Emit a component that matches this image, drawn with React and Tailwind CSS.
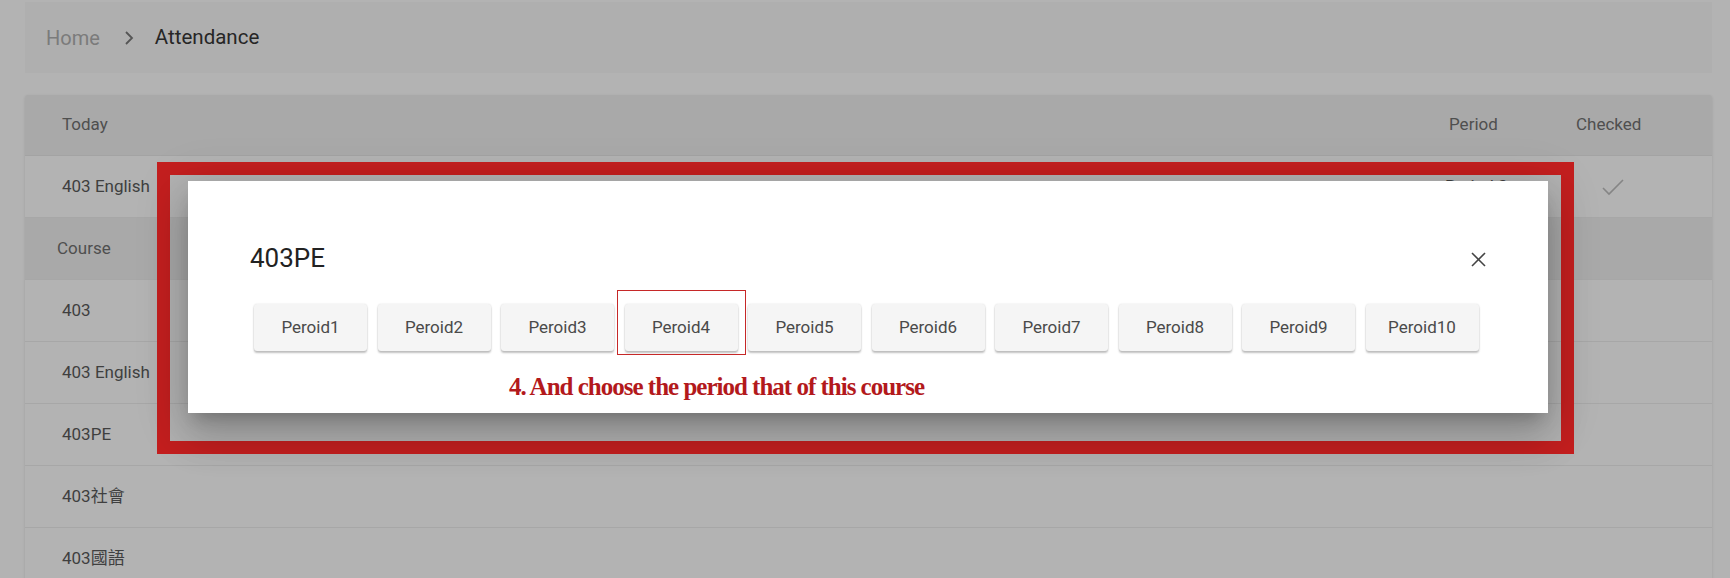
import React from "react";

const font = { fontFamily: "Roboto, 'Noto Sans CJK TC', sans-serif" };

const courses = ["403", "403 English", "403PE", "403社會", "403國語"];
const periods = ["Peroid1", "Peroid2", "Peroid3", "Peroid4", "Peroid5", "Peroid6", "Peroid7", "Peroid8", "Peroid9", "Peroid10"];

function Check() {
  return (
    <svg width="24" height="18" viewBox="0 0 24 18" fill="none">
      <polyline points="2,10 8,16 22,2" stroke="#858585" strokeWidth="1.6" />
    </svg>
  );
}

function Row({ children, period, checked }) {
  return (
    <div className="flex items-center h-[62px] border-b border-[#a7a7a7] bg-[#b3b3b3] text-[#3f3f3f]">
      <div className="flex-1 pl-[37px] text-[17px]">{children}</div>
      <div className="w-[127px] text-[17px]">{period}</div>
      <div className="w-[136px] text-[17px]">
        <div className="w-[74px] flex justify-center">{checked}</div>
      </div>
    </div>
  );
}

export default function App() {
  return (
    <div className="relative h-[578px] overflow-hidden bg-[#b3b3b3]" style={font}>
      <div className="pl-[25px] pr-[18px] pt-[2px]">
        {/* Breadcrumb */}
        <div className="h-[71px] bg-[#afafaf] flex items-center pl-[21px] text-[20px]">
          <span className="text-[#7b7b7b]">Home</span>
          <svg width="12" height="16" viewBox="0 0 12 16" fill="none" className="ml-[23px] mr-[20px]">
            <polyline points="3,2 9,8 3,14" stroke="#555" strokeWidth="1.8" />
          </svg>
          <span className="text-[#262626] text-[20.5px]">Attendance</span>
        </div>

        {/* Table */}
        <div className="mt-[22px] bg-[#b3b3b3] rounded-t-[3px] shadow-[0_1px_3px_rgba(0,0,0,0.12)]">
          <div className="flex items-center h-[61px] bg-[#a9a9a9] border-b border-[#a3a3a3] text-[#4f4f4f] text-[17px] rounded-t-[3px]">
            <div className="flex-1 pl-[37px]">Today</div>
            <div className="w-[127px]">Period</div>
            <div className="w-[136px]">Checked</div>
          </div>
          <Row period={<span className="relative left-[-4px]">Period 3</span>} checked={<Check />}>
            403 English
          </Row>
          <div className="flex items-center h-[62px] bg-[#a9a9a9] border-b border-[#a7a7a7] text-[#4f4f4f] text-[17px] pl-[32px]">
            Course
          </div>
          {courses.map((c) => (
            <Row key={c}>{c}</Row>
          ))}
        </div>
      </div>

      {/* Annotation frame */}
      <div className="absolute left-[157px] top-[162px] w-[1417px] h-[292px] border-[13px] border-[#c41f1f]" />

      {/* Dialog */}
      <div className="absolute left-[188px] top-[181px] w-[1360px] h-[232px] bg-white shadow-[0_11px_15px_-7px_rgba(0,0,0,0.2),0_24px_38px_3px_rgba(0,0,0,0.14),0_9px_46px_8px_rgba(0,0,0,0.12)]">
        <div className="flex items-center justify-between pl-[62px] pr-[62px] pt-[61px] h-[93px]">
          <h2 className="text-[26px] text-[#222] leading-[32px]">403PE</h2>
          <svg width="15" height="15" viewBox="0 0 15 15" className="mt-[2px]">
            <line x1="1" y1="1" x2="14" y2="14" stroke="#444" strokeWidth="1.6" />
            <line x1="14" y1="1" x2="1" y2="14" stroke="#444" strokeWidth="1.6" />
          </svg>
        </div>
        <div className="flex gap-[10.5px] pl-[66px] mt-[30px]">
          {periods.map((p) => (
            <button
              key={p}
              className="w-[113px] h-[47px] bg-[#f5f5f5] rounded-[3px] text-[17px] text-[#4a4a4a] shadow-[0_2px_2px_rgba(0,0,0,0.24),0_0_2px_rgba(0,0,0,0.12)]"
            >
              {p}
            </button>
          ))}
        </div>

        {/* highlight around Peroid4 */}
        <div className="absolute left-[429px] top-[109px] w-[129px] h-[65px] border-[1.5px] border-[#c62828]" />

        <p
          className="absolute left-[321px] top-[187px] text-[25px] font-bold text-[#b3191c] tracking-[-1px] whitespace-nowrap"
          style={{ fontFamily: "'Liberation Serif', serif" }}
        >
          4. And choose the period that of this course
        </p>
      </div>
    </div>
  );
}
